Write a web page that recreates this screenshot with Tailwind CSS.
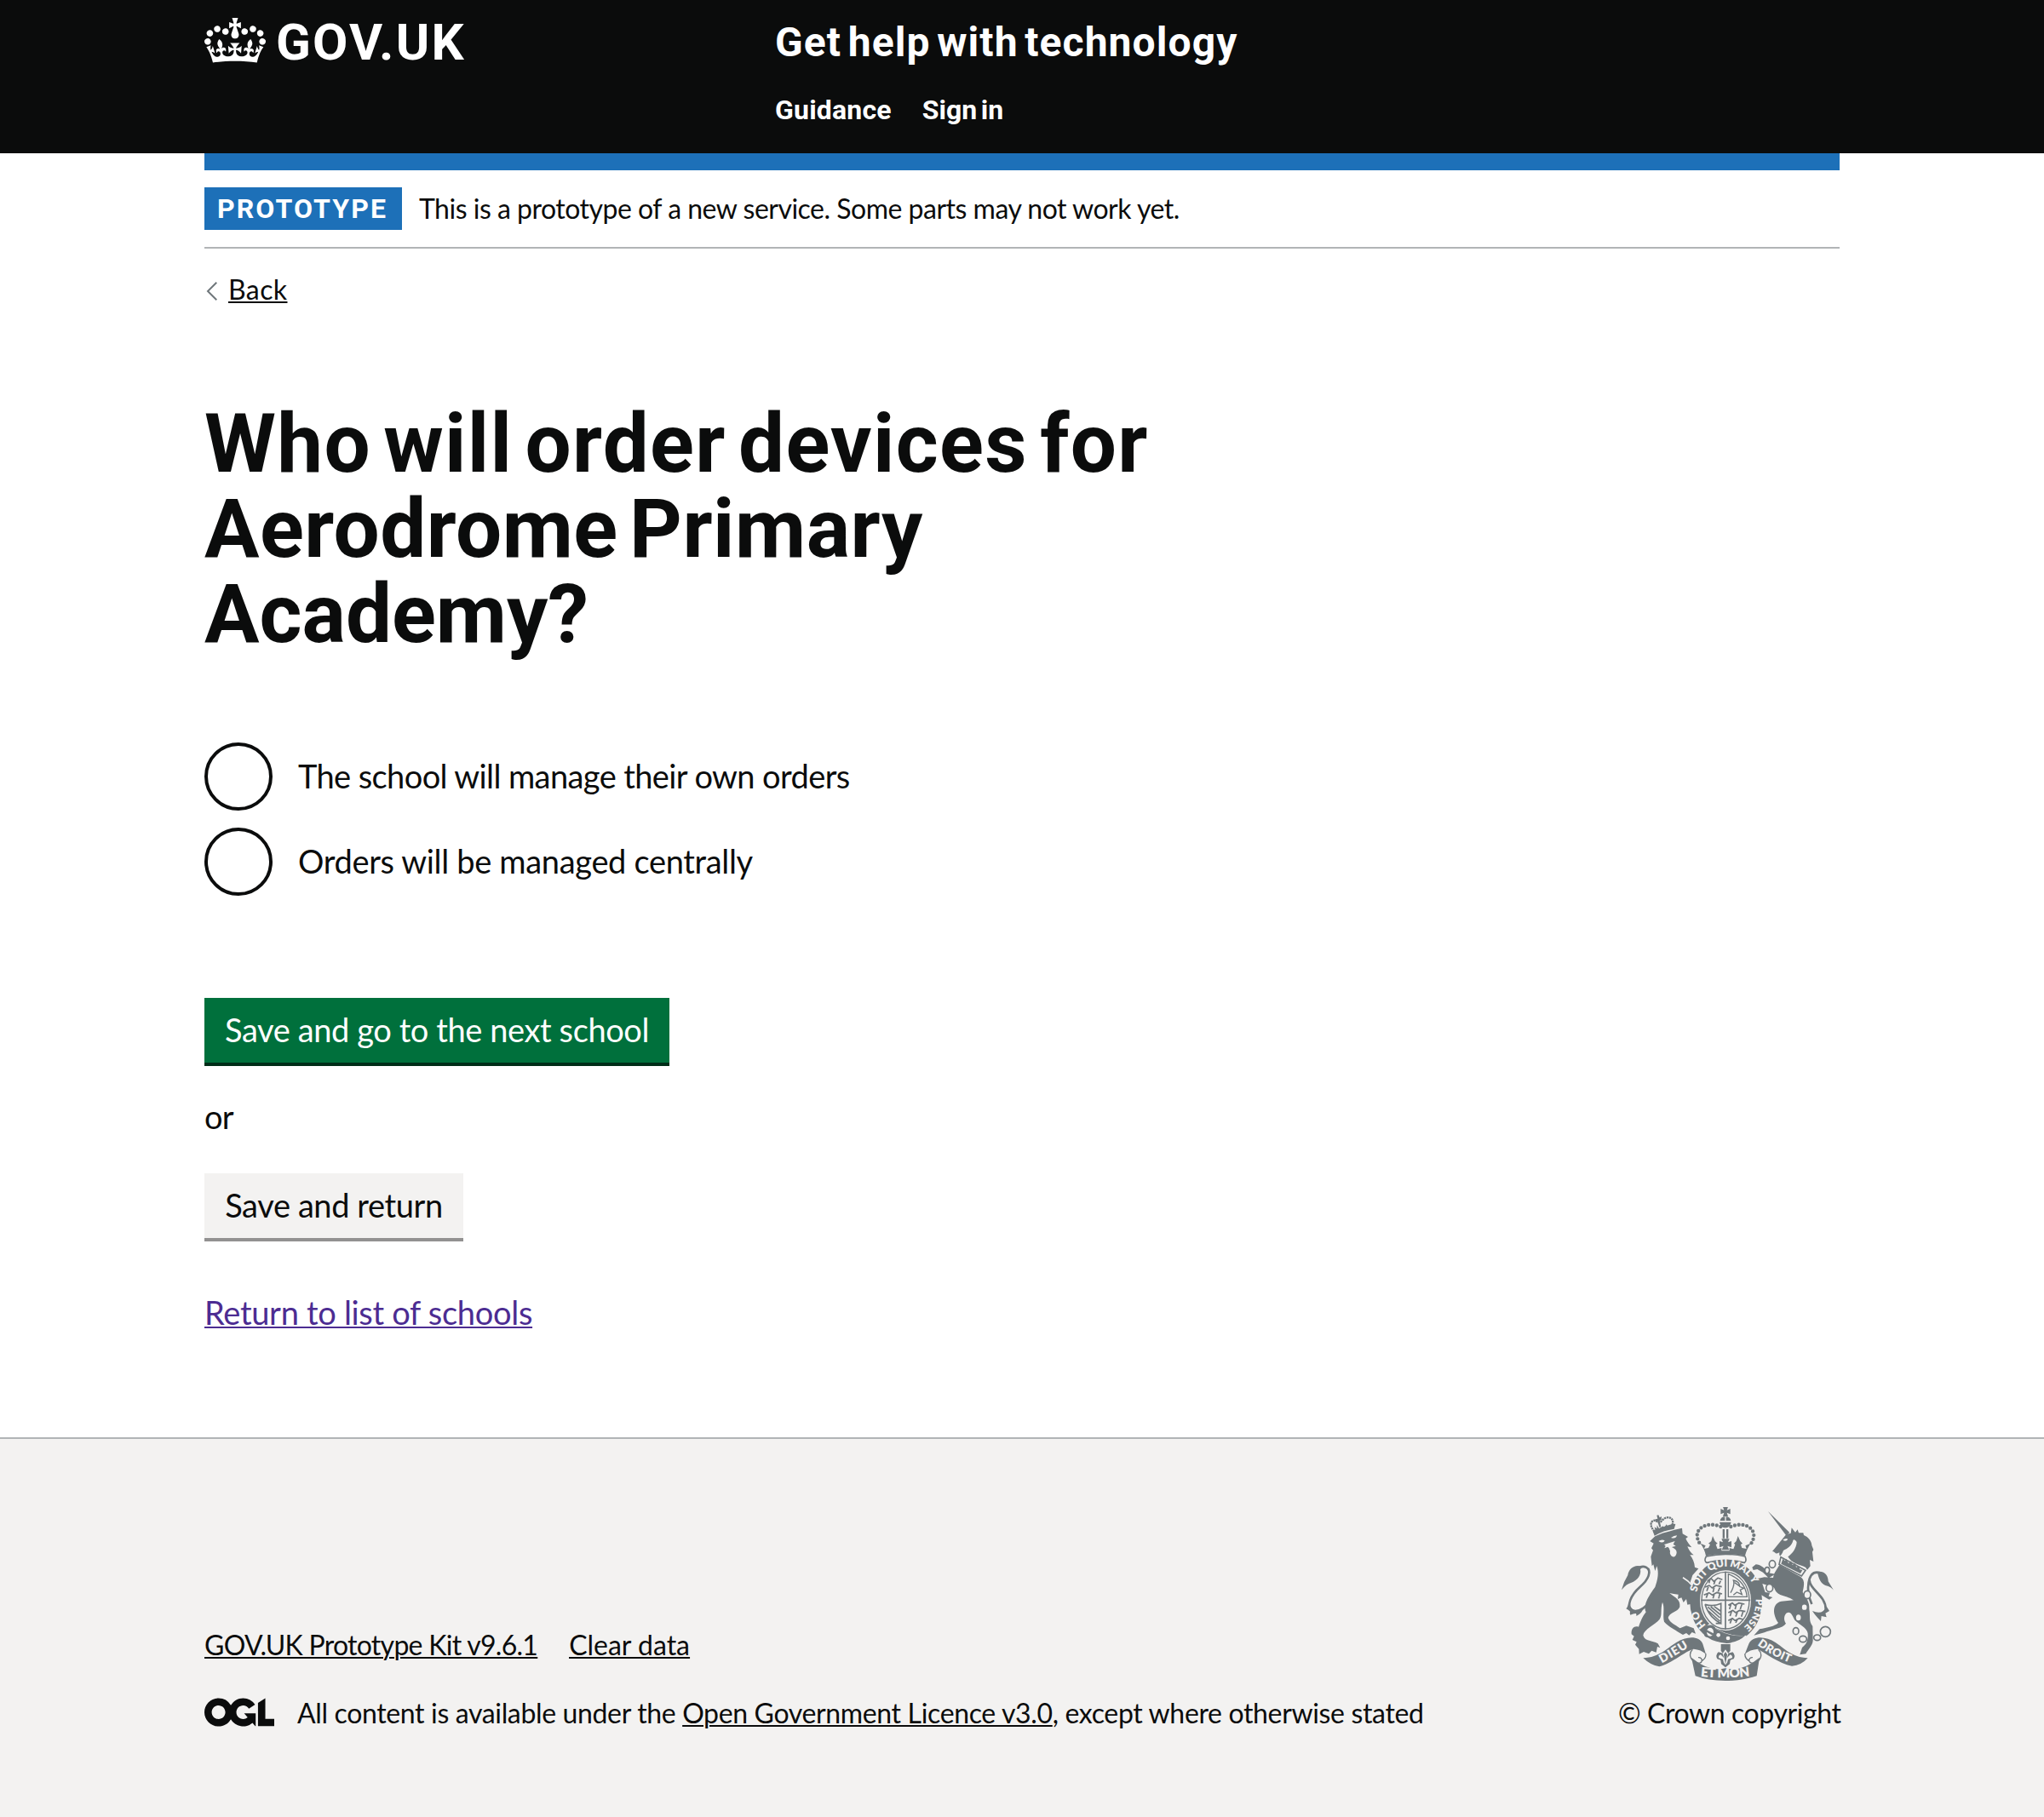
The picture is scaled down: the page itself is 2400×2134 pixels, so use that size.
<!DOCTYPE html>
<html lang="en">
<head>
<meta charset="utf-8">
<title>Who will order devices for Aerodrome Primary Academy? - Get help with technology</title>
<script src="https://cdn.jsdelivr.net/npm/@tailwindcss/browser@4"></script>
</head>
<body class="flex min-h-screen flex-col bg-white font-['Lato',sans-serif] text-[32px] text-[#0b0c0c]">

<header class="h-[180px] bg-[#0b0c0c] font-['Roboto',sans-serif] text-white">
  <div class="mx-[240px] flex">
    <a href="#" class="flex w-[670px] gap-[12px] pt-[20px]">
      <svg class="mt-px h-[53px] w-[72px]" viewBox="0 0 132 97" fill="currentColor" aria-hidden="true"><path fill-rule="evenodd" d="M25 30.2c3.5 1.5 7.7-.2 9.1-3.7 1.5-3.6-.2-7.8-3.9-9.2-3.6-1.4-7.6.3-9.1 3.9-1.4 3.5.3 7.5 3.9 9zM9 39.5c3.6 1.5 7.8-.2 9.2-3.7 1.5-3.6-.2-7.8-3.9-9.1-3.6-1.5-7.6.2-9.1 3.8-1.4 3.5.3 7.5 3.8 9zM4.4 57.2c3.5 1.5 7.7-.2 9.1-3.8 1.5-3.6-.2-7.7-3.9-9.1-3.5-1.5-7.6.3-9.1 3.8-1.4 3.5.3 7.6 3.9 9.1zm38.3-21.4c3.5 1.5 7.7-.2 9.1-3.8 1.5-3.6-.2-7.7-3.9-9.1-3.6-1.5-7.6.3-9.1 3.8-1.3 3.6.4 7.7 3.9 9.1zm64.4-5.6c-3.6 1.5-7.8-.2-9.1-3.7-1.5-3.6.2-7.8 3.8-9.2 3.6-1.4 7.7.3 9.2 3.9 1.3 3.5-.4 7.5-3.9 9zm15.9 9.3c-3.6 1.5-7.7-.2-9.1-3.7-1.5-3.6.2-7.8 3.7-9.1 3.6-1.5 7.7.2 9.2 3.8 1.5 3.5-.3 7.5-3.8 9zm4.7 17.7c-3.6 1.5-7.8-.2-9.2-3.8-1.5-3.6.2-7.7 3.9-9.1 3.6-1.5 7.7.3 9.2 3.8 1.3 3.5-.4 7.6-3.9 9.1zM89.3 35.8c-3.6 1.5-7.8-.2-9.2-3.8-1.4-3.6.2-7.7 3.9-9.1 3.6-1.5 7.7.3 9.2 3.8 1.4 3.6-.3 7.7-3.9 9.1zM69.7 17.7l8.9 4.7V9.3l-8.9 2.8c-.2-.3-.5-.6-.9-.9L72.4 0H59.6l3.5 11.2c-.3.3-.6.5-.9.9l-8.8-2.8v13.1l8.8-4.7c.3.3.6.7.9.9l-5 15.4v.1c-.2.8-.4 1.6-.4 2.4 0 4.1 3.1 7.5 7 8.1h.2c.3 0 .7.1 1 .1.4 0 .7 0 1-.1h.2c4-.6 7.1-4.1 7.1-8.1 0-.8-.1-1.7-.4-2.4V34l-5.1-15.4c.4-.2.7-.6 1-.9zM66 92.8c16.9 0 32.8 1.1 47.1 3.2 4-16.9 8.9-26.7 14-33.5l-9.6-3.4c1 4.9 1.1 7.2 0 10.2-1.5-1.4-3-4.3-4.2-8.7L108.6 76c2.8-2 5-3.2 7.5-3.3-4.4 9.4-10 11.9-13.6 11.2-4.3-.8-6.3-4.6-5.6-7.9 1-4.7 5.7-5.9 8-.5 4.3-8.7-3-11.4-7.6-8.8 7.1-7.2 7.9-13.5 2.1-21.1-8 6.1-8.1 12.3-4.5 20.8-4.7-5.4-12.1-2.5-9.5 6.2 3.4-5.2 7.9-2 7.2 3.1-.6 4.3-6.4 7.8-13.5 7.2-10.3-.9-10.9-8-11.2-13.8 2.5-.5 7.1 1.8 11 7.3L80.2 60c-4.1 4.4-8 5.3-12.3 5.4 1.4-4.4 8-11.6 8-11.6H55.5s6.4 7.2 7.9 11.6c-4.2-.1-8-1-12.3-5.4l1.4 16.4c3.9-5.5 8.5-7.7 10.9-7.3-.3 5.8-.9 12.8-11.1 13.8-7.2.6-12.9-2.9-13.5-7.2-.7-5 3.8-8.3 7.1-3.1 2.7-8.7-4.6-11.6-9.4-6.2 3.7-8.5 3.6-14.7-4.6-20.8-5.8 7.6-5 13.9 2.2 21.1-4.7-2.6-11.9.1-7.7 8.8 2.3-5.5 7.1-4.2 8.1.5.7 3.3-1.3 7.1-5.7 7.9-3.5.7-9-1.8-13.5-11.2 2.5.1 4.7 1.3 7.5 3.3l-4.7-15.4c-1.2 4.4-2.7 7.2-4.3 8.7-1.1-3-.9-5.3 0-10.2l-9.5 3.4c5 6.9 9.9 16.7 14 33.5 14.8-2.1 30.8-3.2 47.7-3.2z"/></svg>
      <span class="text-[60px] leading-[60px] font-bold tracking-[2.2px]">GOV.UK</span>
    </a>
    <div class="pt-[20px] font-bold">
      <a href="#" class="block text-[48px] leading-[60px] tracking-[1.1px] [word-spacing:-5.5px]">Get help with technology</a>
      <nav class="mt-[29px] flex gap-[36px] leading-[40px]">
        <a href="#" class="tracking-[0.2px]">Guidance</a>
        <a href="#" class="[word-spacing:-3.5px]">Sign in</a>
      </nav>
    </div>
  </div>
</header>

<div class="mx-[240px] border-t-[20px] border-[#1d70b8]">
  <div class="flex h-[92px] items-start gap-[20px] border-b-2 border-[#b1b4b6] pt-[20px]">
    <strong class="h-[50px] w-[232px] bg-[#1d70b8] pl-[15px] font-['Roboto',sans-serif] leading-[50px] font-bold tracking-[2.1px] text-white">PROTOTYPE</strong>
    <span class="leading-[49px] tracking-[-0.5px]">This is a prototype of a new service. Some parts may not work yet.</span>
  </div>

  <a href="#" class="mt-[28px] flex w-fit items-start leading-[40px]">
    <svg class="mt-[11px] mr-[13px] ml-[2px] h-[22px] w-[13px]" viewBox="0 0 13 22" fill="none" stroke="#6f777b" stroke-width="2" aria-hidden="true"><path d="M12.3 .7 2 11l10.3 10.3"/></svg>
    <span class="tracking-[0.4px] underline decoration-2 underline-offset-[2px]">Back</span>
  </a>
</div>

<main class="mx-[240px] flex flex-col items-start pt-[111px] text-[38px]">
  <h1 class="font-['Roboto',sans-serif] text-[96px] leading-[100px] font-bold [word-spacing:-11px]">
    <span class="block tracking-[1.35px]">Who will order devices for</span>
    <span class="block tracking-[0.5px]">Aerodrome Primary</span>
    <span class="block">Academy?</span>
  </h1>

  <div class="mt-[101px] flex flex-col gap-[20px]">
    <label class="flex gap-[30px]"><span class="size-[80px] rounded-full border-4 border-[#0b0c0c]"></span><span class="leading-[79px] tracking-[-0.6px]">The school will manage their own orders</span></label>
    <label class="flex gap-[30px]"><span class="size-[80px] rounded-full border-4 border-[#0b0c0c]"></span><span class="leading-[79px] tracking-[-0.33px]">Orders will be managed centrally</span></label>
  </div>

  <button class="mt-[120px] h-[80px] w-[546px] border-b-4 border-[#002d18] bg-[#00703c] pb-px text-center leading-[75px] tracking-[-0.4px] text-white">Save and go to the next school</button>
  <p class="mt-[34px] leading-[50px] tracking-[-0.8px]">or</p>
  <button class="mt-[42px] h-[80px] w-[304px] border-b-4 border-[#929191] bg-[#f3f2f1] pb-px text-center leading-[75px] tracking-[-0.4px]">Save and return</button>
  <a href="#" class="mt-[58px] leading-[50px] tracking-[-0.3px] text-[#4c2c92] underline decoration-2 underline-offset-[2px]">Return to list of schools</a>
</main>

<footer class="mt-[122px] grow border-t-2 border-[#b1b4b6] bg-[#f3f2f1]">
  <div class="mx-[240px] flex items-end justify-between pt-[80px] leading-[40px]">
    <div class="flex flex-col gap-[40px]">
      <div class="flex gap-[37px] underline decoration-2 underline-offset-[2px]">
        <a href="#" class="tracking-[-0.72px]">GOV.UK Prototype Kit v9.6.1</a>
        <a href="#">Clear data</a>
      </div>
      <div class="flex items-start">
        <svg class="mt-[2px] mr-[27px] h-[34px] w-[82px]" viewBox="0 0 483.2 195.7" fill="currentColor" aria-hidden="true"><path d="M421.5 142.8V.1l-50.7 32.3v161.1h112.4v-50.7zm-122.3-9.6A47.12 47.12 0 0 1 221 97.8c0-26 21.1-47.1 47.1-47.1 16.7 0 31.4 8.7 39.7 21.8l42.7-27.2A97.63 97.63 0 0 0 268.1 0c-36.5 0-68.3 20.1-85.1 49.7A98 98 0 0 0 97.8 0C43.9 0 0 43.9 0 97.8s43.9 97.8 97.8 97.8c36.5 0 68.3-20.1 85.1-49.7a97.76 97.76 0 0 0 149.6 25.4l19.4 22.2h3v-87.8h-80l24.3 27.5zM97.8 145c-26 0-47.1-21.1-47.1-47.1s21.1-47.1 47.1-47.1 47.1 21.1 47.1 47.1S123.8 145 97.8 145z"/></svg>
        <p class="tracking-[-0.35px]">All content is available under the <a href="#" class="underline decoration-2 underline-offset-[2px]">Open Government Licence v3.0</a>, except where otherwise stated</p>
      </div>
    </div>

    <div class="w-[260px]">
      <svg class="ml-[2px] h-[204px] w-[252px]" viewBox="66 60 756 612" fill="#6f777b" aria-hidden="true">
        <defs>
          <path id="garter-top" d="M337 360A105 113 0 0 1 543 360"/>
          <path id="garter-right" d="M545 384A105 113 0 0 1 488 492"/>
          <path id="garter-left" d="M370 476A105 113 0 0 1 336 405"/>
          <path id="dieu" d="M214 610Q262 584 322 545"/>
          <path id="droit" d="M550 546Q600 584 668 610"/>
          <path id="etmon" d="M350 657Q438 666 526 655"/>
        </defs>
        <!-- lion -->
        <path d="M172 180 190 163C215 150 240 146 258 140L285 134 287 154 306 165 298 171C303 182 310 192 319 202L304 199C308 210 316 222 326 229L313 229C322 240 329 255 330 272L343 277 322 300 314 325C326 345 340 370 347 398L345 414 333 408 325 418 314 402 304 404 300 384 290 396 283 379 270 384 272 368 256 366 241 363C262 380 280 385 277 412C270 430 240 432 236 450C242 468 262 475 278 487L300 478 326 487 333 506 320 501 310 512 300 504 288 510C265 495 238 482 222 464C216 440 225 415 216 395C208 420 216 440 206 455C190 475 150 490 148 512C155 535 180 528 200 541L208 556 198 552 194 572 178 566 168 577 150 570 134 578 133 560 120 545 125 535 110 528 116 515 107 508C105 485 118 478 132 482C140 460 146 445 158 430C146 405 170 370 190 342C200 315 204 290 196 268L190 285 184 262 179 268 175 235 183 212 177 205 185 188Z"/>
        <path d="m188 161-6-16q70-30 80-25l-5 17Q220 142 188 161Z"/>
        <path fill="none" stroke="#6f777b" stroke-width="7" stroke-dasharray="7 2" d="M188 146C160 115 186 95 205 116M250 124C262 95 228 85 209 114"/>
        <path d="m202 88 4 9 7-4-1 12-6 3 5 22-6 1-6-20-7 2-1-10 8-2-3-12ZM188 130l8 6 1-12 7 12 14-9 3 8 9-14 5 7 9-5-2 14-50 14Z"/>
        <path fill="#f3f2f1" d="M202 180q12-8 22-2-6 12-22 2ZM246 168q10-8 21-8-4 14-21 8ZM222 192l38-12-6 11 9 6-14 4q18 8 17 20-3 16-14 14-12-7-9-20-3-12-8-15l-12 5 4-8Z"/>
        <path fill="none" stroke="#f3f2f1" stroke-width="5" d="M288 308Q325 330 342 372"/>
        <path fill="none" stroke="#6f777b" stroke-width="8" d="M186 366C165 415 130 432 110 424C86 410 106 368 137 341C166 317 181 284 158 272Q142 265 124 280"/>
        <path d="M145 271C120 258 96 278 94 300Q78 325 72 352 90 330 105 327C130 318 142 298 138 280ZM96 400q-4 16-8 18 10 5 14 10-2 8 1 12 12-6 20-5 2 6 1 9 16-8 22-20l8-10q-36 22-56-6Z"/>
        <!-- unicorn -->
        <path d="M588 75 664 150 651 159ZM652 156 668 152 671 133 684 149 692 139 696 151 712 151 714 159C730 165 742 182 742 195L748 210 744 218 748 252 735 246 737 268 726 281 720 272C700 264 670 258 658 235 672 225 688 207 689 183 683 175 678 172 676 178 672 197 655 207 642 213 634 234 626 238 628 220 612 229 616 218 603 216 611 208 600 200C612 188 630 160 652 156Z"/>
        <path fill="#f3f2f1" d="M640 176q10-8 18-3-6 10-18 3Z"/>
        <path d="M628 264 703 306C722 320 712 345 710 360C722 380 735 395 733 420C738 445 730 460 745 480L746 530C745 548 730 560 721 577L700 580 708 555C722 545 730 530 728 505C725 485 700 475 682 458C672 440 668 425 652 434C642 446 644 460 651 470C640 488 600 490 575 502L538 512 558 490C585 485 612 480 624 468C605 440 600 400 635 392L678 388C655 370 622 376 612 350 600 330 606 300 612 290Z"/>
        <path fill="none" stroke="#6f777b" stroke-width="5" d="M633 236 627 262 706 303 720 283Z"/>
        <path d="m640 242 8 8 4-8 8 16 9-8 5 14 10-6 3 14 10-4 3 12 9 2-7 12-68-34Z"/>
        <path d="M614 296 590 292C578 276 560 262 545 262L532 272 536 282 550 279 570 290 590 310ZM615 310 575 307 548 313 556 350 562 368 592 386 604 378 590 374 594 362 578 360 568 330 615 345Z"/>
        <path fill="none" stroke="#6f777b" stroke-width="8" d="M742 402C718 350 730 290 760 290Q785 292 786 310M734 318C735 352 792 372 791 420Q786 440 765 440"/>
        <path d="M762 288C790 284 800 305 800 322L822 358Q812 340 790 336C775 330 765 312 762 288ZM794 410l10 16-14 8 4 14-18-4-2 18q-20-20-30-36 36 16 50-16Z"/>
        <g fill="#f3f2f1" stroke="#6f777b" stroke-width="5">
          <ellipse cx="603" cy="261" rx="11" ry="13"/><ellipse cx="585" cy="283" rx="8" ry="11"/><ellipse cx="593" cy="345" rx="12" ry="14"/><ellipse cx="726" cy="369" rx="12" ry="14"/><ellipse cx="716" cy="413" rx="11" ry="12"/><ellipse cx="695" cy="449" rx="11" ry="13"/><ellipse cx="686" cy="497" rx="10" ry="12"/><ellipse cx="711" cy="525" rx="13" ry="11"/><ellipse cx="761" cy="520" rx="12" ry="10"/><circle cx="790" cy="499" r="18"/>
        </g>
        <!-- royal crown -->
        <path d="M429 59h18l-4 12 12-5v19l-12-5 4 13h-18l4-13-12 5V66l12 5Z"/>
        <path d="M419 108q2-14 17-14v14ZM440 94q15 0 17 14h-17ZM417 113h41q-3 16-16 20h-9q-13-4-16-20Z"/>
        <path d="M428 138h7v32h-7ZM441 138h7v32h-7ZM424 172l28 0-5 12 12-4v22l-14-5 6 14h-26l6-14-14 5v-22l12 4Z"/>
        <g fill="none" stroke="#6f777b" stroke-width="13" stroke-linecap="round" stroke-dasharray="0 14.4">
          <path d="M421 129C380 112 338 128 338 162Q340 180 352 194"/><path d="M457 129C498 112 538 128 538 162Q536 180 524 194"/>
        </g>
        <path d="M350 188 368 196 362 207 378 204 384 192 378 188 388 180 393 162 401 180 410 188 404 192 410 208 424 204 424 214 452 214 452 204 466 208 472 192 468 188 476 180 482 162 490 180 498 188 492 192 496 204 512 207 508 196 526 188C518 202 510 215 507 232Q438 218 369 232C366 215 360 202 350 188Z"/>
        <path fill="none" stroke="#6f777b" stroke-width="5" d="M370 234Q438 218 507 234Q514 250 505 256Q438 238 372 256Q361 250 370 234Z"/>
        <!-- garter and shield -->
        <path fill-rule="evenodd" d="M440 245A127 147 0 0 1 440 540 127 147 0 0 1 440 245ZM438 283A90 106 0 0 0 438 495 90 106 0 0 0 438 283Z"/>
        <ellipse cx="438" cy="389" rx="84" ry="100" fill="none" stroke="#6f777b" stroke-width="4"/>
        <path fill="none" stroke="#6f777b" stroke-width="5" d="M438 287V492M352 388H526"/>
        <path fill="none" stroke="#6f777b" stroke-width="5" stroke-linejoin="round" d="m374 320 14-8 9 10 14-12 16 6M366 342l15-6 10 9 14-9 20 5M362 370l18-8 12 8 16-9 18 5M384 312l-4 16m22-10-5 14m24-12-6 12M378 340l-6 16m26-12-4 16m24-16-6 14M376 364l-6 16m28-12-4 14m24-16-4 16M448 406l14-8 9 8 14-8 20 4M448 432l16-8 10 8 14-8 20 4M448 460l14-8 10 8 14-8 14 4M458 400l-6 20m24-16-4 16m24-18-6 18M460 426l-6 18m26-14-6 16m26-18-6 18M460 454l-6 16m26-14-6 12"/>
        <path fill="none" stroke="#6f777b" stroke-width="4" d="M448 296V376H514Q508 320 448 296ZM456 362q16-28 10-44 22 4 22 22l14 6-12 6 6 16-18-8-12 10M470 326l20 14"/>
        <path fill="none" stroke="#6f777b" stroke-width="5" d="M366 403Q395 412 422 400V470Q405 462 390 446T366 403M376 412l42 38M386 411l34 28M398 410l22 16M378 426l40 36M404 470h20"/>
        <path fill="#f3f2f1" d="M366 484 382 470Q440 520 512 512L500 548 440 548 375 525Z"/>
        <path d="M372 478q22-8 32 10 52 32 104 24-24 24-66 28-44-4-66-20-20-4-10-24-8-10 6-18Z"/>
        <g fill="#f3f2f1"><circle cx="413" cy="511" r="7"/><circle cx="447" cy="522" r="7"/><ellipse cx="384" cy="500" rx="12" ry="15"/></g>
        <path d="m366 490 32 16-6 6-28-16ZM422 543h33v24l-8 8 16-4q12 10 4 24l-12 4-2 14-15 12-15-12-2-14-12-4q-8-14 4-24l16 4-7-8Z"/>
        <path fill="#f3f2f1" d="m438 562 10 14-5 16 12-12q10 4 6 12l-14 4-3 12-6 8-6-8-3-12-14-4q-4-8 6-12l12 12-5-16Z"/>
        <path d="m438 570 6 10-6 34-6-34Z"/>
        <!-- motto scroll -->
        <path d="M148 592C205 590 235 555 265 537C300 515 345 512 358 542L369 578Q352 562 326 560C300 565 250 610 205 622Q175 618 148 592ZM728 592C672 590 642 555 614 537C580 515 535 512 520 542L506 578Q524 562 552 560C580 575 625 610 672 620Q705 618 728 592Z"/>
        <path fill="none" stroke="#6f777b" stroke-width="4" d="M322 562C308 575 312 595 330 606Q352 616 356 600 352 588 342 590M368 576Q372 592 352 604M554 562C568 575 566 595 548 606Q526 616 520 600 524 588 534 590M507 576Q504 592 524 604"/>
        <path d="M318 590Q380 642 438 628 496 642 558 590L548 655Q500 672 438 672T332 655Z"/>
        <g fill="#f3f2f1" font-family="Lato, sans-serif" font-weight="800">
          <text font-size="36"><textPath href="#garter-top" textLength="268">SOIT QUI MAL Y</textPath></text>
          <text font-size="34"><textPath href="#garter-right" textLength="112">PENSE</textPath></text>
          <text font-size="36" letter-spacing="3"><textPath href="#garter-left">HO</textPath></text>
          <text font-size="42" letter-spacing="3"><textPath href="#dieu">DIEU</textPath></text>
          <text font-size="40" letter-spacing="1"><textPath href="#droit">DROIT</textPath></text>
          <text font-size="46"><textPath href="#etmon" textLength="174">ET MON</textPath></text>
        </g>
      </svg>
      <p class="mt-[18px] text-right tracking-[-0.4px] whitespace-nowrap">© Crown copyright</p>
    </div>
  </div>
</footer>
</body>
</html>
